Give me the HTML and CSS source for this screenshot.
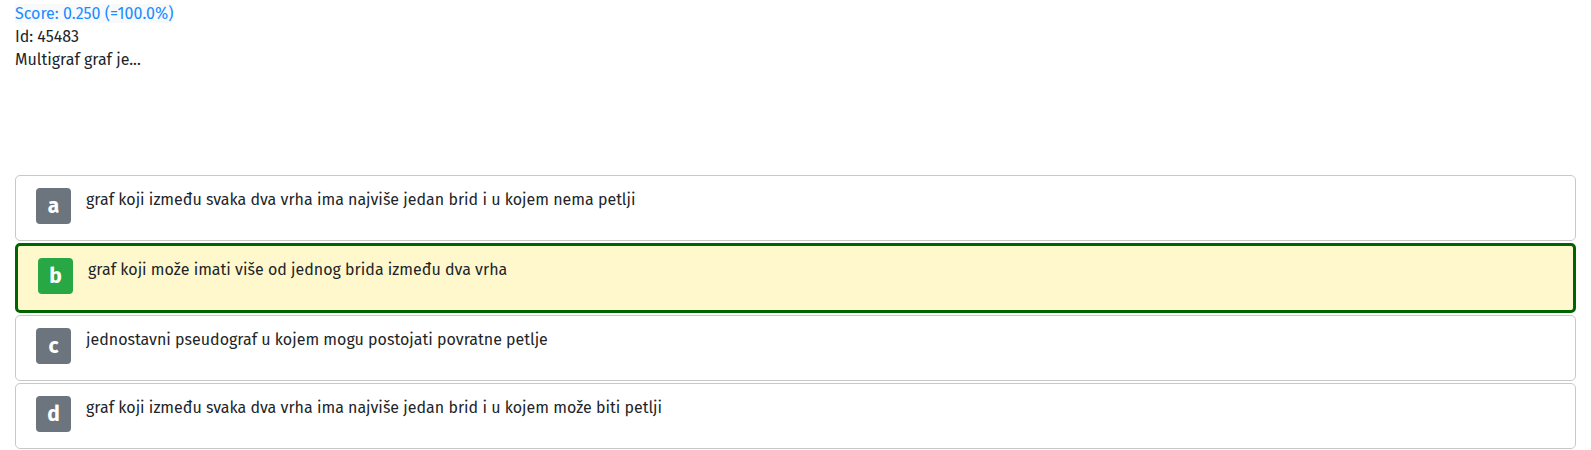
FILE: index.html
```html
<!DOCTYPE html>
<html>
<head>
<meta charset="utf-8">
<link rel="stylesheet" href="styles.css">
</head>
<body>
<div class="page">
  <div class="question">
    <div class="score"><span class="score-text">Score: 0.250 (=100.0%)</span></div>
    <div class="qid">Id: 45483</div>
    <div class="qtext">Multigraf graf je...</div>
  </div>
  <div class="answers">
    <div class="answer">
      <span class="badge">a</span>
      <span class="atext">graf koji između svaka dva vrha ima najviše jedan brid i u kojem nema petlji</span>
    </div>
    <div class="answer correct">
      <span class="badge green">b</span>
      <span class="atext">graf koji može imati više od jednog brida između dva vrha</span>
    </div>
    <div class="answer">
      <span class="badge">c</span>
      <span class="atext">jednostavni pseudograf u kojem mogu postojati povratne petlje</span>
    </div>
    <div class="answer">
      <span class="badge">d</span>
      <span class="atext">graf koji između svaka dva vrha ima najviše jedan brid i u kojem može biti petlji</span>
    </div>
  </div>
</div>
</body>
</html>
```
FILE: styles.css
```css
html, body {
  margin: 0;
  padding: 0;
  background: #ffffff;
}
body {
  font-family: "Fira Sans", Roboto, "Liberation Sans", sans-serif;
  font-size: 16px;
  color: #212529;
}
.page {
  padding: 2px 15px 0 15px;
}
.question {
  line-height: 23px;
  height: 173px;
}
.score-text {
  color: #1a8cff;
  background: #f7f9fb;
}
.answers {
  display: flex;
  flex-direction: column;
  gap: 2px;
}
.answer {
  display: flex;
  align-items: flex-start;
  gap: 15px;
  padding: 12px 20px 0 20px;
  border: 1px solid #c8c8c8;
  border-radius: 5px;
  box-sizing: border-box;
  height: 66px;
  background: #ffffff;
}
.answer.correct {
  border: 3px solid #006400;
  background: #fff8cd;
  height: 70px;
}
.badge {
  flex: none;
  width: 35px;
  height: 36px;
  border-radius: 4px;
  background: #6c757d;
  color: #ffffff;
  font-weight: bold;
  font-size: 21px;
  display: flex;
  align-items: center;
  justify-content: center;
}
.badge.green {
  background: #28a745;
}
.atext {
  line-height: 24px;
}
```
